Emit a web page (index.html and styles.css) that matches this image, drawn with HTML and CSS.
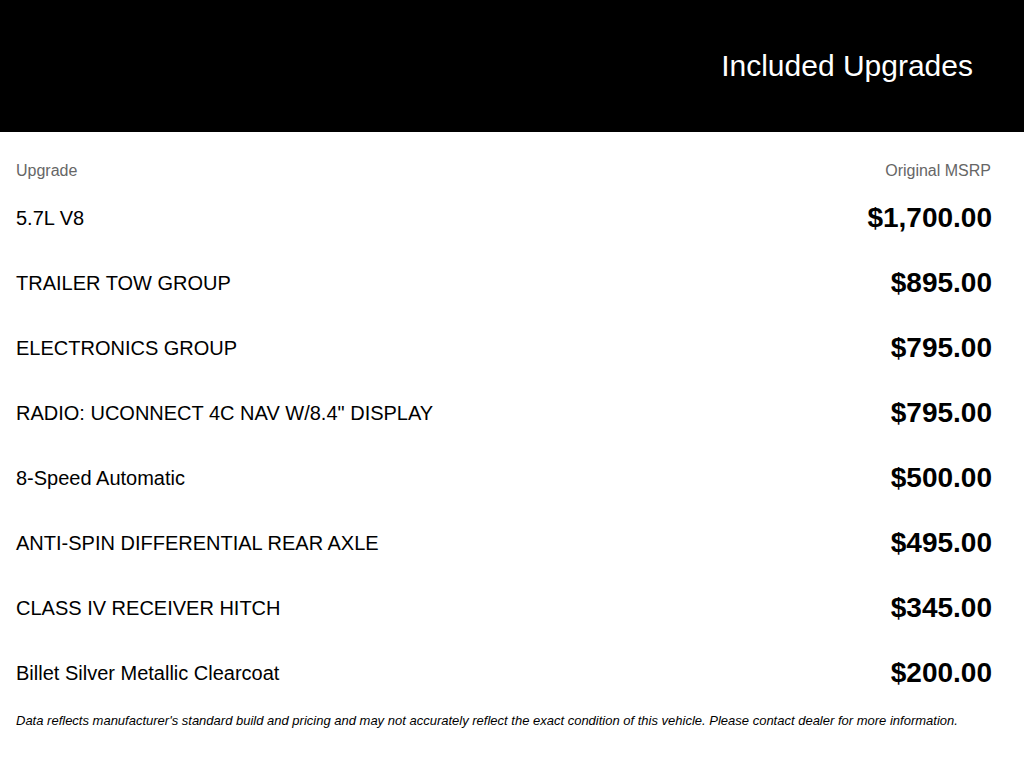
FILE: index.html
```html
<!DOCTYPE html>
<html>
<head>
<meta charset="utf-8">
<link rel="stylesheet" href="styles.css">
</head>
<body>
<header class="banner">
  <h1 class="banner-title">Included Upgrades</h1>
</header>
<main class="content">
  <div class="col-head">
    <span>Upgrade</span>
    <span class="col-right">Original MSRP</span>
  </div>
  <ul class="list">
    <li class="row"><span class="name">5.7L V8</span><span class="price">$1,700.00</span></li>
    <li class="row"><span class="name">TRAILER TOW GROUP</span><span class="price">$895.00</span></li>
    <li class="row"><span class="name">ELECTRONICS GROUP</span><span class="price">$795.00</span></li>
    <li class="row"><span class="name">RADIO: UCONNECT 4C NAV W/8.4" DISPLAY</span><span class="price">$795.00</span></li>
    <li class="row"><span class="name">8-Speed Automatic</span><span class="price">$500.00</span></li>
    <li class="row"><span class="name">ANTI-SPIN DIFFERENTIAL REAR AXLE</span><span class="price">$495.00</span></li>
    <li class="row"><span class="name">CLASS IV RECEIVER HITCH</span><span class="price">$345.00</span></li>
    <li class="row"><span class="name">Billet Silver Metallic Clearcoat</span><span class="price">$200.00</span></li>
  </ul>
  <p class="note">Data reflects manufacturer's standard build and pricing and may not accurately reflect the exact condition of this vehicle. Please contact dealer for more information.</p>
</main>
</body>
</html>
```
FILE: styles.css
```css
* { box-sizing: border-box; }
html, body {
  margin: 0;
  padding: 0;
  background: #fff;
  font-family: "Liberation Sans", Arial, sans-serif;
  color: #000;
}
.banner {
  background: #000;
  height: 132px;
  display: flex;
  align-items: center;
  justify-content: flex-end;
  padding-right: 51px;
}
.banner-title {
  margin: 0;
  color: #fff;
  font-size: 30px;
  font-weight: normal;
  line-height: 36px;
}
.content {
  padding: 29px 32px 0 16px;
}
.col-head {
  display: flex;
  justify-content: space-between;
  font-size: 16px;
  line-height: 20px;
  color: #666;
  margin-bottom: 4px;
}
.col-right {
  padding-right: 1px;
}
.list {
  list-style: none;
  margin: 0;
  padding: 0;
}
.row {
  height: 65px;
  display: flex;
  align-items: center;
  justify-content: space-between;
}
.name {
  font-size: 20px;
  line-height: 24px;
}
.price {
  font-size: 28px;
  font-weight: bold;
  line-height: 32px;
}
.note {
  margin: 8px 0 0;
  font-size: 13px;
  line-height: 16px;
  font-style: italic;
}
```
